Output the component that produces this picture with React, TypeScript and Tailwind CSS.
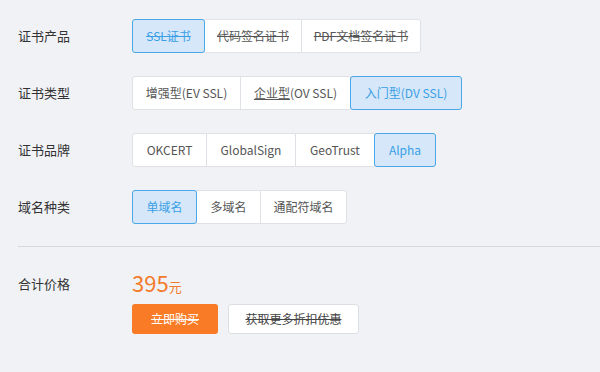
import React, { useState } from "react";

type Opt = { label: React.ReactNode; w: string; strike?: boolean };

const font = { fontFamily: '"Noto Sans CJK SC", "Noto Sans", sans-serif' };

function OptionGroup({
  options,
  selected,
  onSelect,
}: {
  options: Opt[];
  selected: number;
  onSelect: (i: number) => void;
}) {
  return (
    <div className="flex">
      {options.map((o, i) => {
        const active = i === selected;
        return (
          <button
            key={i}
            onClick={() => onSelect(i)}
            className={[
              "h-[34px] flex items-center justify-center border text-[12px] first:rounded-l-[3px] last:rounded-r-[3px] first:ml-0 -ml-px",
              o.w,
              active
                ? "relative z-10 bg-[#d5e7f9] border-[#49a7ea] text-[#3a9fe6] rounded-[3px]"
                : "bg-white border-[#dfe1e6] text-[#555]",
              o.strike ? "line-through" : "",
            ].join(" ")}
          >
            {o.label}
          </button>
        );
      })}
    </div>
  );
}

export default function App() {
  const [product, setProduct] = useState(0);
  const [type, setType] = useState(2);
  const [brand, setBrand] = useState(3);
  const [domain, setDomain] = useState(0);

  const rows = [
    {
      title: "证书产品",
      value: product,
      set: setProduct,
      options: [
        { label: "SSL证书", w: "w-[73px]", strike: true },
        { label: "代码签名证书", w: "w-[98px]", strike: true },
        { label: "PDF文档签名证书", w: "w-[120px]", strike: true },
      ],
    },
    {
      title: "证书类型",
      value: type,
      set: setType,
      options: [
        { label: "增强型(EV SSL)", w: "w-[109px]" },
        {
          label: (
            <span>
              <span className="underline">企业型</span>(OV SSL)
            </span>
          ),
          w: "w-[111px]",
        },
        { label: "入门型(DV SSL)", w: "w-[112px]" },
      ],
    },
    {
      title: "证书品牌",
      value: brand,
      set: setBrand,
      options: [
        { label: "OKCERT", w: "w-[75px]" },
        { label: "GlobalSign", w: "w-[90px]" },
        { label: "GeoTrust", w: "w-[80px]" },
        { label: "Alpha", w: "w-[62px]" },
      ],
    },
    {
      title: "域名种类",
      value: domain,
      set: setDomain,
      options: [
        { label: "单域名", w: "w-[65px]" },
        { label: "多域名", w: "w-[65px]" },
        { label: "通配符域名", w: "w-[87px]" },
      ],
    },
  ];

  return (
    <div className="min-h-screen bg-[#f1f2f6] pt-[19px]" style={font}>
      <div className="flex flex-col gap-[23px] pl-[18px]">
        {rows.map((r) => (
          <div key={r.title} className="flex items-center">
            <div className="w-[114px] text-[13px] text-[#333]">{r.title}</div>
            <OptionGroup options={r.options} selected={r.value} onSelect={r.set} />
          </div>
        ))}
      </div>

      {/* divider */}
      <div className="ml-[18px] mt-[22px] h-px bg-[#d6d8dd]" />

      {/* total */}
      <div className="flex pl-[18px] pt-[24px]">
        <div className="w-[114px] pt-[3px] text-[13px] text-[#333]">合计价格</div>
        <div className="flex flex-col">
          <div className="flex items-baseline text-[#f27b2c] leading-none h-[27px]">
            <span className="text-[22px]">395</span>
            <span className="text-[13px]">元</span>
          </div>
          <div className="mt-[6px] flex gap-[10px]">
            <button className="h-[30px] w-[86px] rounded-[3px] bg-[#f97b25] text-[12px] text-white line-through">
              立即购买
            </button>
            <button className="h-[30px] w-[131px] rounded-[3px] border border-[#dcdfe4] bg-white text-[12px] text-[#444] line-through">
              获取更多折扣优惠
            </button>
          </div>
        </div>
      </div>
    </div>
  );
}
